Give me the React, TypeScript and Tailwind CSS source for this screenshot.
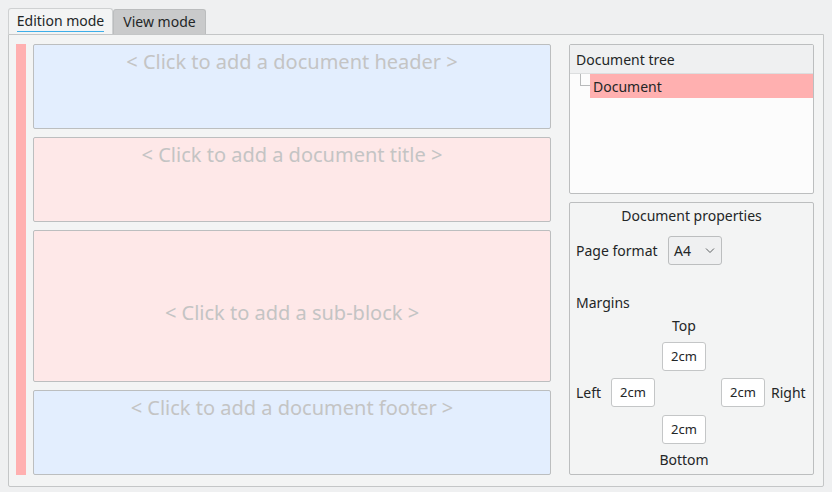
import React from 'react';

const font = { fontFamily: '"Noto Sans", "Open Sans", sans-serif' };

const Block: React.FC<{ text: string; tone: 'blue' | 'pink'; top: string; className?: string }> = ({
  text,
  tone,
  top,
  className,
}) => (
  <div
    className={`flex items-start justify-center rounded-[2px] border border-[#bcbebf] text-[20px] text-[#c4c4c4] ${
      tone === 'blue' ? 'bg-[#e3eefe]' : 'bg-[#fee8e8]'
    } ${top} ${className ?? ''}`}
  >
    <span className="leading-[24px]">{text}</span>
  </div>
);

const MarginBox: React.FC = () => (
  <div className="flex h-[29px] w-[44px] shrink-0 items-center justify-center rounded-[3px] border border-[#c4c6c7] bg-white text-[13px] text-[#232627]">
    2cm
  </div>
);

export default function App() {
  return (
    <div className="h-[492px] w-[832px] bg-[#eff0f1] px-[8px] pt-[8px] text-[#232627]" style={font}>
      {/* tabs */}
      <div className="flex h-[26px] items-end text-[14px]">
        <div className="flex h-[26px] w-[105px] flex-col items-center rounded-t-[3px] border border-b-0 border-[#cfd1d2] bg-[#f3f4f4] pt-[3px]">
          <span className="border-b border-[#3daee9] pb-[1px] leading-[18px]">Edition mode</span>
        </div>
        <div className="flex h-[25px] w-[93px] items-center justify-center rounded-t-[3px] border border-b-0 border-[#bbbdbe] bg-[#c9cacb] leading-[18px]">
          View mode
        </div>
      </div>
      {/* panel */}
      <div className="flex h-[453px] w-[816px] gap-[7px] rounded-b-[2px] border border-[#c4c6c7] bg-[#f3f4f4] pl-[7px] pr-[9px] pt-[9px]">
        <div className="flex h-[431px] w-[10px] bg-[#ffb0b0]" />
        <div className="flex w-[518px] flex-col gap-[8px]">
          <Block text="< Click to add a document header >" tone="blue" top="pt-[5px]" className="h-[85px]" />
          <Block text="< Click to add a document title >" tone="pink" top="pt-[5px]" className="h-[85px]" />
          <Block text="< Click to add a sub-block >" tone="pink" top="pt-[70px]" className="h-[152px]" />
          <Block text="< Click to add a document footer >" tone="blue" top="pt-[5px]" className="h-[85px]" />
        </div>
        <div className="ml-[11px] flex flex-1 flex-col gap-[8px]">
          {/* tree */}
          <div className="flex h-[150px] flex-col overflow-hidden rounded-[2px] border border-[#bcbebf] bg-[#fcfcfc] text-[14px]">
            <div className="flex h-[29px] items-center border-b border-[#dcdedf] bg-[#eff0f1] pl-[6px]">
              Document tree
            </div>
            <div className="flex h-[24px] items-stretch">
              <div className="ml-[10px] h-[12px] w-[10px] border-b border-l border-[#b8babb]" />
              <div className="flex flex-1 items-center bg-[#ffb0b0] pl-[3px]">Document</div>
            </div>
          </div>
          {/* properties */}
          <div className="flex h-[273px] flex-col rounded-[2px] border border-[#bcbebf] bg-[#f3f4f4] px-[6px] text-[14px]">
            <div className="mt-[3px] text-center leading-[20px]">Document properties</div>
            <div className="mt-[10px] flex items-center">
              <span className="w-[92px]">Page format</span>
              <div className="flex h-[29px] w-[54px] items-center justify-between rounded-[3px] border border-[#bcbebf] bg-[#eff0f1] pl-[5px] pr-[6px]">
                <span>A4</span>
                <svg width="10" height="6" viewBox="0 0 10 6" fill="none" stroke="#5d6163" strokeWidth="1">
                  <path d="M1 0.5 L5 4.5 L9 0.5" />
                </svg>
              </div>
            </div>
            <div className="mt-[28px] leading-[20px]">Margins</div>
            <div className="mt-[3px] flex flex-col">
              <div className="ml-[86px] w-[44px] text-center leading-[20px]">Top</div>
              <div className="ml-[86px] mt-[6px]">
                <MarginBox />
              </div>
              <div className="mt-[7px] flex items-center">
                <span className="w-[35px]">Left</span>
                <MarginBox />
                <div className="w-[66px]" />
                <MarginBox />
                <span className="ml-[6px]">Right</span>
              </div>
              <div className="ml-[86px] mt-[8px]">
                <MarginBox />
              </div>
              <div className="ml-[76px] mt-[6px] w-[64px] text-center leading-[20px]">Bottom</div>
            </div>
          </div>
        </div>
      </div>
    </div>
  );
}
